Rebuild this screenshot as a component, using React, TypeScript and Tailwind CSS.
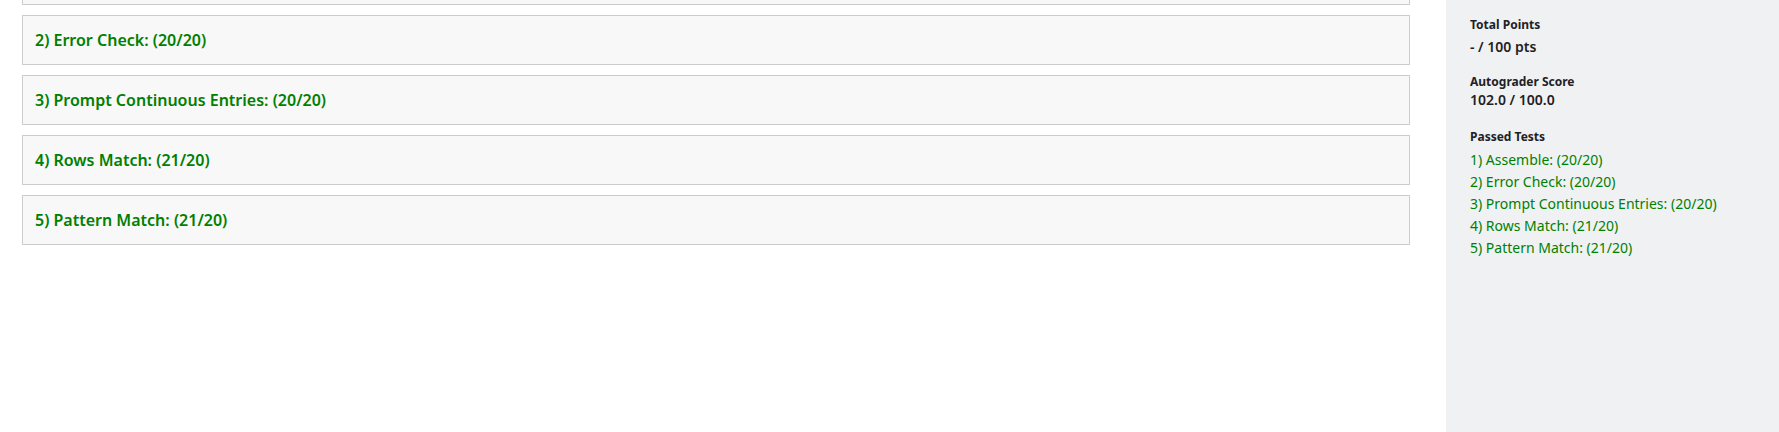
const tests = [
  "1) Assemble: (20/20)",
  "2) Error Check: (20/20)",
  "3) Prompt Continuous Entries: (20/20)",
  "4) Rows Match: (21/20)",
  "5) Pattern Match: (21/20)",
];

export default function App() {
  return (
    <div
      className="flex h-[432px] w-full overflow-hidden bg-white"
      style={{ fontFamily: '"Noto Sans", "Open Sans", sans-serif' }}
    >
      {/* results list, scrolled so only the bottom of the first one shows */}
      <main className="flex-1 overflow-hidden pl-[22px] pr-[36px]">
        <div className="flex flex-col gap-[10px]">
          <div className="h-[5px] border-x border-b border-[#cccccc] bg-[#f8f8f8]" />
          {tests.slice(1).map((t) => (
            <div
              key={t}
              className="flex h-[50px] items-center border border-[#cccccc] bg-[#f8f8f8] pl-[12px]"
            >
              <span className="text-[16px] font-[630] text-[#008000]">{t}</span>
            </div>
          ))}
        </div>
      </main>

      <aside className="w-[333px] shrink-0 bg-[#f0f1f3] pl-[24px] pt-[17px] text-[#1e2125]">
        <div className="text-[12px] font-bold leading-[16px]">Total Points</div>
        <div className="mt-[4px] text-[14px] font-semibold leading-[20px]">- / 100 pts</div>

        <div className="mt-[17px] text-[12px] font-bold leading-[16px]">Autograder Score</div>
        <div className="text-[14px] font-semibold leading-[20px]">102.0 / 100.0</div>

        <div className="mt-[19px] text-[12px] font-bold leading-[16px]">Passed Tests</div>
        <ul className="mt-[4px]">
          {tests.map((t) => (
            <li key={t} className="text-[14px] leading-[22px] text-[#008000]">
              {t}
            </li>
          ))}
        </ul>
      </aside>
    </div>
  );
}
